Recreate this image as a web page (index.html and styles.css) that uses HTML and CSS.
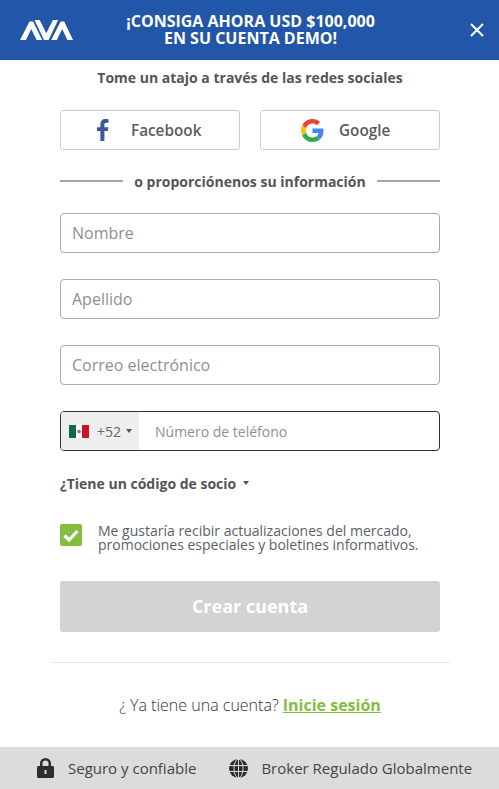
FILE: index.html
```html
<!DOCTYPE html>
<html lang="es">
<head>
<meta charset="utf-8">
<title>AVA</title>
<link rel="stylesheet" href="styles.css">
</head>
<body>
<div class="page">
  <header class="banner">
    <svg class="logo" width="53" height="20" viewBox="0 0 53 20"><path fill="#fff" d="M0 20 9.500 1.500h3.600L22.200 20h-5.600L11.200 9 6 20zM14.500 0h5.200l6.600 13.200L32.900 0h5.200L28.600 20h-4.600zM31.200 20 40.600 1.500h3.600L53 20h-5.600L42.200 9 36.800 20z"/></svg>
    <h1 class="banner-title">¡CONSIGA AHORA USD $100,000<br>EN SU CUENTA DEMO!</h1>
    <svg class="close" width="14" height="14" viewBox="0 0 14 14"><path stroke="#fff" stroke-width="2" d="M1 1l12 12M13 1 1 13"/></svg>
  </header>
  <main class="content">
    <p class="lead">Tome un atajo a través de las redes sociales</p>
    <div class="socials">
      <button class="social"><svg class="fb" width="12" height="22" viewBox="0 0 12 22"><path fill="#3b5998" d="M3.400 22V12.100H0V8.200h3.400V5.300C3.400 2 5.400 0 8.500 0c1.400 0 2.600.1 3 .2v3.500H9.400c-1.600 0-2 .8-2 2v2.500h3.900l-.5 3.900H7.400V22z"/></svg><span>Facebook</span></button>
      <button class="social"><svg class="gg" width="23" height="23" viewBox="0 0 48 48"><path fill="#EA4335" d="M24 9.500c3.500 0 6.700 1.300 9.100 3.500l6.800-6.800C35.800 2.400 30.300 0 24 0 14.600 0 6.500 5.400 2.600 13.200l7.900 6.100C12.400 13.700 17.700 9.500 24 9.500z"/><path fill="#4285F4" d="M46.900 24.500c0-1.600-.1-3.100-.4-4.500H24v9h12.900c-.6 3-2.200 5.500-4.700 7.200l7.700 6c4.500-4.200 7-10.300 7-17.700z"/><path fill="#FBBC05" d="M10.500 28.700c-.5-1.400-.8-3-.8-4.700s.3-3.200.8-4.700l-7.900-6.100C.9 16.500 0 20.100 0 24s.9 7.500 2.600 10.800z"/><path fill="#34A853" d="M24 48c6.500 0 11.900-2.100 15.900-5.800l-7.700-6c-2.200 1.500-4.900 2.300-8.200 2.300-6.300 0-11.600-4.200-13.500-9.900l-7.900 6.100C6.500 42.600 14.600 48 24 48z"/></svg><span>Google</span></button>
    </div>
    <div class="divider"><span>o proporciónenos su información</span></div>
    <form class="fields">
      <input class="field" placeholder="Nombre">
      <input class="field" placeholder="Apellido">
      <input class="field" placeholder="Correo electrónico">
      <div class="phone">
        <div class="dial">
          <svg class="flag" width="20" height="13" viewBox="0 0 20 13"><rect width="20" height="13" fill="#fff"/><rect width="7" height="13" fill="#0b6b48"/><rect x="13" width="7" height="13" fill="#ce1126"/><circle cx="10" cy="6.500" r="1.800" fill="#8a7a4a"/></svg>
          <span>+52</span><i class="caret"></i>
        </div>
        <input class="phone-input" placeholder="Número de teléfono">
      </div>
    </form>
    <div class="partner">¿Tiene un código de socio<i class="caret"></i></div>
    <div class="consent">
      <span class="check"><svg width="16" height="13" viewBox="0 0 16 13"><path fill="none" stroke="#fff" stroke-width="3.200" d="M1.500 6.500 6 11l8.500-9"/></svg></span>
      <p>Me gustaría recibir actualizaciones del mercado, promociones especiales y boletines informativos.</p>
    </div>
    <button class="create">Crear cuenta</button>
  </main>
  <div class="rule"></div>
  <p class="login">¿ Ya tiene una cuenta? <a href="#">Inicie sesión</a></p>
  <footer class="trust">
    <div class="trust-item first"><svg width="17" height="20" viewBox="0 0 17 20"><path fill="#2d2d2d" fill-rule="evenodd" d="M3 8V5.500a5.500 5.500 0 0 1 11 0V8h1.500c.8 0 1.500.7 1.500 1.500v9c0 .8-.7 1.500-1.500 1.500h-14C.7 20 0 19.300 0 18.500v-9C0 8.700.7 8 1.500 8zm2.500 0h6V5.500a3 3 0 0 0-6 0zM7.500 12v4h2v-4z"/></svg><span>Seguro y confiable</span></div>
    <div class="trust-item"><svg width="19" height="19" viewBox="0 0 19 19"><circle cx="9.500" cy="9.500" r="9.500" fill="#2d2d2d"/><g fill="none" stroke="#dcdcdc"><path d="M0 6.500h19M0 12.500h19M9.500 0v19"/><ellipse cx="9.500" cy="9.500" rx="4.500" ry="9.500"/></g></svg><span>Broker Regulado Globalmente</span></div>
  </footer>
</div>
</body>
</html>
```
FILE: styles.css
```css
* { box-sizing: border-box; }
html, body { margin: 0; padding: 0; }
body { font-family: "Open Sans", sans-serif; color: #555; background: #fff; }
.page { width: 499px; height: 789px; display: flex; flex-direction: column; overflow: hidden; }

.banner { height: 60px; flex: none; background: #2156a8; display: flex; align-items: center; padding: 0 15px 0 20px; }
.logo { flex: none; }
.banner-title { flex: 1; margin: 0; text-align: center; color: #fff; font-size: 16px; line-height: 17px; font-weight: 700; padding-right: 42px; white-space: nowrap; }
.close { flex: none; }

.content { padding: 0 59px 0 60px; }
.lead { margin: 8px 0 0; height: 20px; font-size: 14px; line-height: 20px; font-weight: 700; text-align: center; color: #555; }
.socials { display: flex; gap: 20px; margin-top: 22px; }
.social { flex: 1; height: 40px; background: #fff; border: 1px solid #ccc; border-radius: 3px; display: flex; align-items: center; font: 600 15.300px "Open Sans", sans-serif; color: #5c5c5c; padding: 0; }
.fb { margin-left: 36px; margin-right: 22px; }
.gg { margin-left: 40px; margin-right: 15px; }

.divider { display: flex; align-items: center; gap: 11px; margin-top: 21px; height: 20px; font-size: 14px; font-weight: 700; color: #555; white-space: nowrap; justify-content: center; }
.divider::before, .divider::after { content: ""; flex: 1; height: 2px; background: #a5a5a5; }

.fields { display: flex; flex-direction: column; gap: 26px; margin-top: 22px; }
.field { height: 40px; border: 1px solid #a9a9a9; border-radius: 4px; padding: 0 11px; font: 16px "Open Sans", sans-serif; color: #555; width: 100%; outline: none; }
.field::placeholder, .phone-input::placeholder { color: #8f8f8f; opacity: 1; }
.phone { height: 40px; border: 1px solid #333; border-radius: 4px; display: flex; align-items: center; overflow: hidden; }
.dial { width: 78px; height: 100%; background: #eee; display: flex; align-items: center; padding-left: 8px; font-size: 14px; color: #666; flex: none; }
.flag { margin-right: 8px; }
.caret { display: inline-block; width: 0; height: 0; border: 3px solid transparent; border-top: 4px solid #555; border-bottom: 0; margin-left: 5px; }
.phone-input { flex: 1; min-width: 0; border: 0; outline: none; padding: 0 0 0 16px; font: 14px "Open Sans", sans-serif; color: #555; }

.partner { margin-top: 23px; height: 20px; line-height: 20px; font-size: 14px; font-weight: 700; color: #555; display: flex; align-items: center; }
.partner .caret { margin-left: 7px; margin-top: -3px; }

.consent { display: flex; gap: 16px; margin-top: 20px; height: 47px; }
.check { width: 22px; height: 22px; flex: none; background: #84bd40; border-radius: 2px; display: flex; align-items: center; justify-content: center; margin-top: 10px; }
.consent p { margin: 10px 0 0; font-size: 14px; line-height: 14px; color: #5a5f69; white-space: normal; }

.create { display: block; width: 100%; height: 51px; margin-top: 20px; padding: 0 0 2px; border: 0; border-radius: 3px; background: #d3d3d3; color: #fff; font: 700 18px "Open Sans", sans-serif; }

.rule { height: 1px; background: #e6e6e6; margin: 30px 49px 0 51px; flex: none; }
.login { margin: 30px 0 0 1px; height: 24px; line-height: 24px; text-align: center; font-size: 16px; font-weight: 300; color: #333; }
.login a { color: #84bd40; font-weight: 700; text-decoration: underline; }

.trust { margin-top: auto; height: 42px; flex: none; background: #dcdcdc; display: flex; align-items: center; padding-left: 37px; gap: 33px; }
.trust-item { display: flex; align-items: center; gap: 13px; font-size: 15px; color: #444; white-space: nowrap; }
.trust-item.first { gap: 14px; }
```
